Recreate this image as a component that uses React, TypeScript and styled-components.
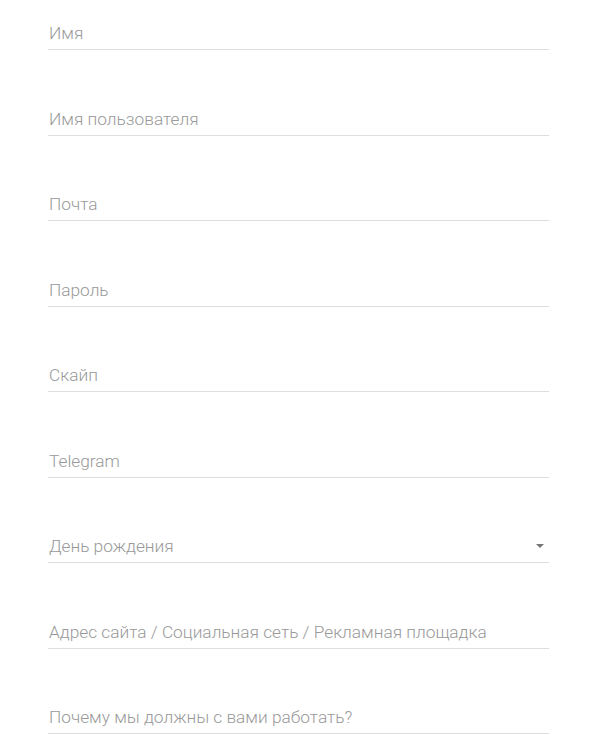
import styled, { createGlobalStyle } from 'styled-components';

const GlobalStyle = createGlobalStyle`
  html, body {
    margin: 0;
    padding: 0;
    background: #ffffff;
    font-family: Roboto, 'Noto Sans', sans-serif;
  }
`;

const Form = styled.form`
  display: flex;
  flex-direction: column;
  gap: 52.5px;
  width: 501px;
  padding: 17px 0 0 48px;
`;

const Field = styled.div`
  display: flex;
  align-items: center;
  height: 32px;
  border-bottom: 1px solid #dedede;
`;

const Input = styled.input`
  flex: 1;
  height: 32px;
  padding: 0 0 0 1px;
  border: none;
  outline: none;
  background: transparent;
  font-family: Roboto, 'Noto Sans', sans-serif;
  font-size: 17.3px;
  font-weight: 300;
  color: #333;

  &::placeholder {
    color: #999999;
  }
`;

const SelectText = styled.span`
  flex: 1;
  padding-left: 1px;
  font-size: 17.3px;
  font-weight: 300;
  line-height: 32px;
  color: #999999;
`;

const Caret = styled.svg`
  width: 8px;
  height: 4px;
  margin-right: 5px;
`;

const fields = [
  'Имя',
  'Имя пользователя',
  'Почта',
  'Пароль',
  'Скайп',
  'Telegram',
];

export default function App() {
  return (
    <>
      <GlobalStyle />
      <Form>
        {fields.map((f) => (
          <Field key={f}>
            <Input placeholder={f} type={f === 'Пароль' ? 'password' : 'text'} />
          </Field>
        ))}
        <Field>
          <SelectText>День рождения</SelectText>
          <Caret viewBox="0 0 8 4">
            <path d="M0 0 L8 0 L4 4 Z" fill="#757575" />
          </Caret>
        </Field>
        <Field>
          <Input placeholder="Адрес сайта / Социальная сеть / Рекламная площадка" />
        </Field>
        <Field>
          <Input placeholder="Почему мы должны с вами работать?" />
        </Field>
      </Form>
    </>
  );
}
